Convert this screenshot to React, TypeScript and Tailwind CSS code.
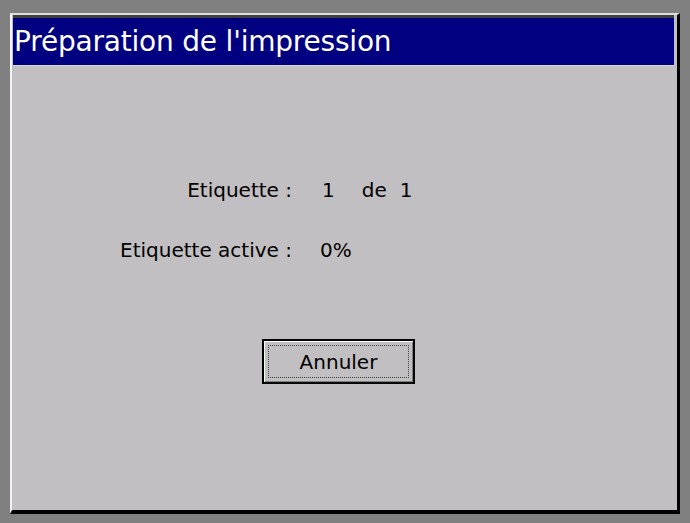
export default function App() {
  return (
    <div className="w-[690px] h-[523px] bg-[#808080] pt-[13px] pl-[10px] font-['Tahoma','DejaVu_Sans',sans-serif]">
      <div className="w-[670px] h-[501px] bg-[#c2bfc2] border-t-2 border-l-2 border-t-[#dedede] border-l-[#f4f4f4] border-r-[3px] border-b-[4px] border-r-black border-b-black flex flex-col">
        <div className="border-t-[3px] border-t-[#404040] ml-[1px] mr-[3px]">
          <div className="h-[48px] bg-[#000080] flex items-center pl-[1px] pt-[1px] text-white text-[28px] leading-none tracking-[-0.2px] border-b border-b-[#d8d8d8]">
            Préparation de l'impression
          </div>
        </div>

        <div className="flex-1 flex flex-col text-black text-[20px] leading-none">
          <div className="mt-[114px] flex items-center">
            <span className="w-[280px] text-right">Etiquette :</span>
            <span className="ml-[30px]">1</span>
            <span className="ml-[27px]">de</span>
            <span className="ml-[13px]">1</span>
          </div>
          <div className="mt-[40px] flex items-center">
            <span className="w-[280px] text-right">Etiquette active :</span>
            <span className="ml-[28px]">0%</span>
          </div>

          <div className="mt-[79px] ml-[250px]">
            <button className="w-[153px] h-[45px] border-2 border-black bg-[#c2bfc2] shadow-[inset_1px_1px_#ffffff,inset_-1px_-1px_#808080] p-[4px]">
              <div className="h-full w-full border border-dotted border-[#404040] flex items-center justify-center text-[20px]">
                Annuler
              </div>
            </button>
          </div>
        </div>
      </div>
    </div>
  );
}
